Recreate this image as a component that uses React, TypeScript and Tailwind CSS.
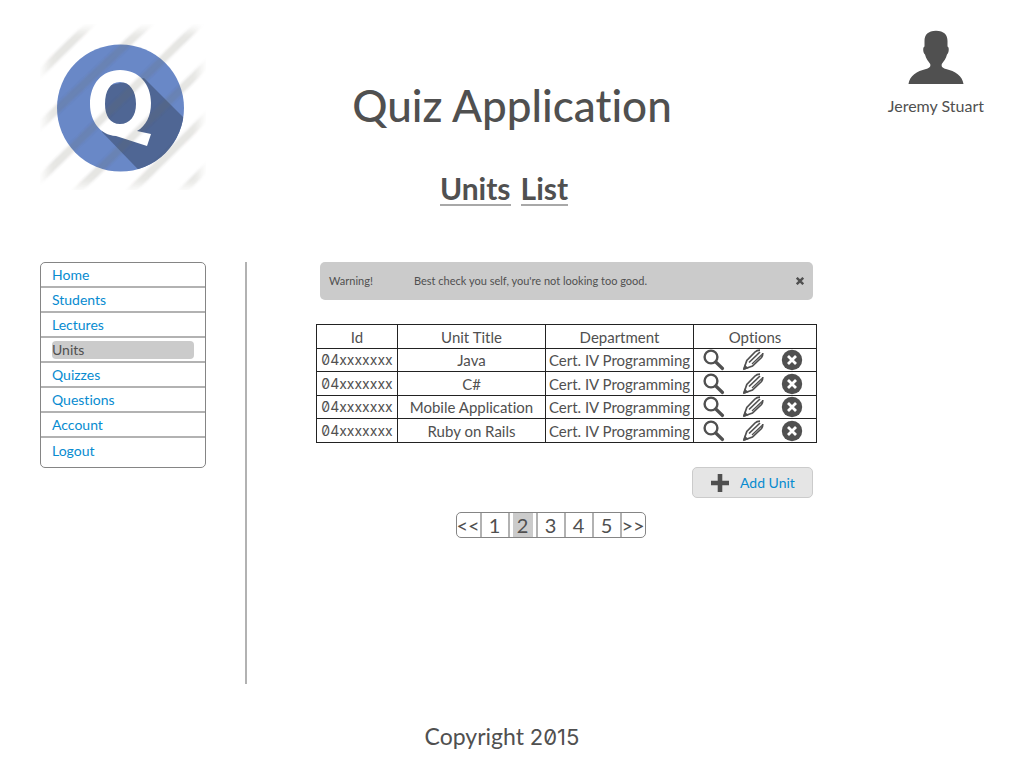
const navItems = ["Home", "Students", "Lectures", "Units", "Quizzes", "Questions", "Account", "Logout"];

const units = [
  { id: "04xxxxxxx", title: "Java", department: "Cert. IV Programming" },
  { id: "04xxxxxxx", title: "C#", department: "Cert. IV Programming" },
  { id: "04xxxxxxx", title: "Mobile Application", department: "Cert. IV Programming" },
  { id: "04xxxxxxx", title: "Ruby on Rails", department: "Cert. IV Programming" },
];

const pages = ["<<", "1", "2", "3", "4", "5", ">>"];

function Logo() {
  return (
    <svg viewBox="0 0 166 166" className="h-[166px] w-[166px]" role="img" aria-label="Quiz logo">
      <defs>
        <clipPath id="disc">
          <circle cx="80.500" cy="84" r="63.500" />
        </clipPath>
        <filter id="soft" x="-10%" y="-10%" width="120%" height="120%">
          <feGaussianBlur stdDeviation="1.3" />
        </filter>
        <filter id="fade" x="-10%" y="-10%" width="120%" height="120%">
          <feGaussianBlur stdDeviation="5" />
        </filter>
        <filter id="edge">
          <feGaussianBlur stdDeviation="0.6" />
        </filter>
        <mask id="frame" maskUnits="userSpaceOnUse" x="0" y="0" width="166" height="166">
          <rect x="6" y="6" width="154" height="156" fill="#fff" filter="url(#fade)" />
        </mask>
      </defs>
      <g filter="url(#edge)">
        <circle cx="80.500" cy="84" r="63.500" fill="#6988c7" />
        <g clipPath="url(#disc)">
          <path d="M104 54L158 108V166H118L62 108L66 62Z" fill="#4f6694" />
        </g>
        <path
          fillRule="evenodd"
          fill="#fff"
          d="M80 46C99 46 111 60 111 79C111 92 106 102 97 107L111 110L107 122L76 112C60 111 50 97 50 80C50 60 62 46 80 46ZM80 58C70 58 65 67 65 80C65 92 70 100 80 100C90 100 96 92 96 80C96 67 90 58 80 58Z"
        />
      </g>
      <g mask="url(#frame)">
        <path
          filter="url(#soft)"
          stroke="#6b6558"
          strokeOpacity="0.17"
          strokeWidth="8"
          fill="none"
          d="M-4 53L54 -4M-4 105L112 -4M-4 159L163 -4M34 170L172 35M88 170L172 87M140 170L172 138"
        />
      </g>
    </svg>
  );
}

function UserIcon() {
  return (
    <svg viewBox="0 0 56 54" className="h-[54px] w-14" fill="#505050" aria-hidden="true">
      <path d="M28 .8C36 .8 39.500 5 39.500 11V16.500C41.500 17 41 23 39 24.500C38 29 35.500 31.500 33.800 34C33 37 35 38.200 38 39C47 41 54.500 46 55.500 54H.5C1.500 46 9 41 18 39C21 38.200 23 37 22.200 34C20.500 31.500 18 29 17 24.500C15 23 14.500 17 16.500 16.500V11C16.500 5 20 .8 28 .8Z" />
    </svg>
  );
}

function SearchIcon() {
  return (
    <svg viewBox="0 0 22 22" className="h-[22px] w-[22px]" fill="none" stroke="#505050" aria-hidden="true">
      <circle cx="8" cy="8" r="6.400" strokeWidth="2.400" />
      <path d="M12.800 13L19.500 19.500" strokeWidth="3.200" strokeLinecap="round" />
    </svg>
  );
}

function PencilIcon() {
  return (
    <svg viewBox="0 0 22 22" className="h-[22px] w-[22px]" fill="none" stroke="#505050" aria-hidden="true">
      <path d="M1.800 20L4.800 11.500L13 3C14.500 1.500 16 1.200 18 1.200" strokeWidth="1.700" />
      <path d="M2 20L10.500 17L19.500 8.500C20.500 7.200 20.800 6 20.800 4" strokeWidth="1.700" />
      <path d="M7 13.500L18 3" strokeWidth="1.700" />
      <path d="M10 15L20 5.500" strokeWidth="1.300" />
      <path d="M.8 21.200L2.800 15.500L6.500 19.200Z" fill="#505050" stroke="none" />
    </svg>
  );
}

function DeleteIcon() {
  return (
    <svg viewBox="0 0 22 22" className="h-[22px] w-[22px]" aria-hidden="true">
      <circle cx="11" cy="11" r="10.200" fill="#505050" />
      <path d="M7 7L15 15M15 7L7 15" stroke="#fff" strokeWidth="2.800" />
    </svg>
  );
}

export default function App() {
  return (
    <div className="min-h-screen bg-white px-10 pt-6 font-['Lato',sans-serif] text-[#505050] [font-variant-ligatures:none]">
      <header className="grid grid-cols-[166px_1fr_166px]">
        <Logo />
        <div className="flex flex-col items-center pt-[54px] text-center">
          <h1 className="text-[44px] leading-[54px] font-medium">Quiz Application</h1>
          <h2 className="mt-10 mr-4 flex gap-[10px] text-[30px] leading-8 font-bold">
            <span className="border-b-2 border-[#a8a8a8]">Units</span>
            <span className="border-b-2 border-[#a8a8a8]">List</span>
          </h2>
        </div>
        <div className="flex flex-col items-center justify-self-end pt-1.5">
          <UserIcon />
          <p className="mt-3 text-base leading-5">Jeremy Stuart</p>
        </div>
      </header>

      <div className="mt-14 flex min-h-[422px] items-stretch">
        <nav aria-label="Main" className="w-[166px] shrink-0">
          <ul className="rounded-[5px] border border-[#858585] pb-1 text-sm">
            {navItems.map((item, i) => (
              <li key={item} className={i < navItems.length - 1 ? "flex h-[25px] items-center border-b-2 border-[#b2b2b2] px-[11px]" : "flex h-[25px] items-center px-[11px]"}>
                {item === "Units" ? (
                  <a href="#units" aria-current="page" className="flex-1 rounded-sm bg-[#cbcbcb] leading-[18px]">
                    {item}
                  </a>
                ) : (
                  <a href={`#${item.toLowerCase()}`} className="flex-1 leading-[22px] text-[#078bd0]">
                    {item}
                  </a>
                )}
              </li>
            ))}
          </ul>
        </nav>

        <div className="ml-[39px] w-0.5 shrink-0 bg-[#b2b2b2]" />

        <main className="mr-[167px] ml-[69px] min-w-0 flex-1">
          <div role="alert" className="mx-1 flex h-[38px] items-center rounded-[5px] bg-[#cbcbcb] px-[9px] text-[11px]">
            <span className="w-[85px]">Warning!</span>
            <span className="flex-1">Best check you self, you're not looking too good.</span>
            <button type="button" aria-label="Dismiss">
              <svg viewBox="0 0 8 8" className="h-2 w-2" stroke="#505050" strokeWidth="2.400" aria-hidden="true">
                <path d="M.8 .8L7.200 7.200M7.200 .8L.8 7.200" />
              </svg>
            </button>
          </div>

          <table className="mt-6 w-full table-fixed border-collapse text-center text-[15px] leading-5">
            <colgroup>
              <col className="w-[16.2%]" />
              <col className="w-[29.6%]" />
              <col className="w-[29.6%]" />
              <col className="w-[24.6%]" />
            </colgroup>
            <thead>
              <tr className="h-6">
                {["Id", "Unit Title", "Department", "Options"].map((h) => (
                  <th key={h} className="border border-[#222222] p-0 font-normal">{h}</th>
                ))}
              </tr>
            </thead>
            <tbody>
              {units.map((u) => (
                <tr key={u.title} className="odd:h-[23px] even:h-6">
                  <td className="border border-[#222222] p-0 font-['Inter',sans-serif] text-sm leading-5 slashed-zero">{u.id}</td>
                  <td className="border border-[#222222] p-0">{u.title}</td>
                  <td className="border border-[#222222] p-0 whitespace-nowrap">{u.department}</td>
                  <td className="border border-[#222222] p-0">
                    <div className="flex items-center justify-center gap-[17px] pr-1">
                      <button type="button" aria-label={`View ${u.title}`}><SearchIcon /></button>
                      <button type="button" aria-label={`Edit ${u.title}`}><PencilIcon /></button>
                      <button type="button" aria-label={`Delete ${u.title}`}><DeleteIcon /></button>
                    </div>
                  </td>
                </tr>
              ))}
            </tbody>
          </table>

          <div className="mt-6 mr-1 flex justify-end">
            <button type="button" className="flex h-[31px] w-[121px] items-center gap-[11px] rounded-[5px] border border-[#cbcbcb] bg-[#e5e5e5] pl-[18px] text-sm text-[#078bd0]">
              <svg viewBox="0 0 18 18" className="h-[18px] w-[18px]" stroke="#505050" strokeWidth="4.600" aria-hidden="true">
                <path d="M9 0V18M0 9H18" />
              </svg>
              Add Unit
            </button>
          </div>

          <nav aria-label="Pagination" className="mt-[14px] mr-8 flex justify-center">
            <ul className="grid h-[26px] w-[190px] grid-cols-[25px_repeat(5,28px)_1fr] rounded-[5px] border border-[#858585] text-xl leading-6">
              {pages.map((p, i) => (
                <li key={p} className={i < pages.length - 1 ? "flex justify-center border-r-2 border-[#b2b2b2]" : "flex justify-center"}>
                  <a href={`#page-${i}`} className={p === "2" ? "w-5 bg-[#cbcbcb] text-center" : "block"}>{p}</a>
                </li>
              ))}
            </ul>
          </nav>
        </main>
      </div>

      <footer className="mt-9 mr-5 text-center text-[23px] leading-8">
        Copyright <span className="font-['Inter',sans-serif] text-[22px] slashed-zero">2015</span>
      </footer>
    </div>
  );
}
